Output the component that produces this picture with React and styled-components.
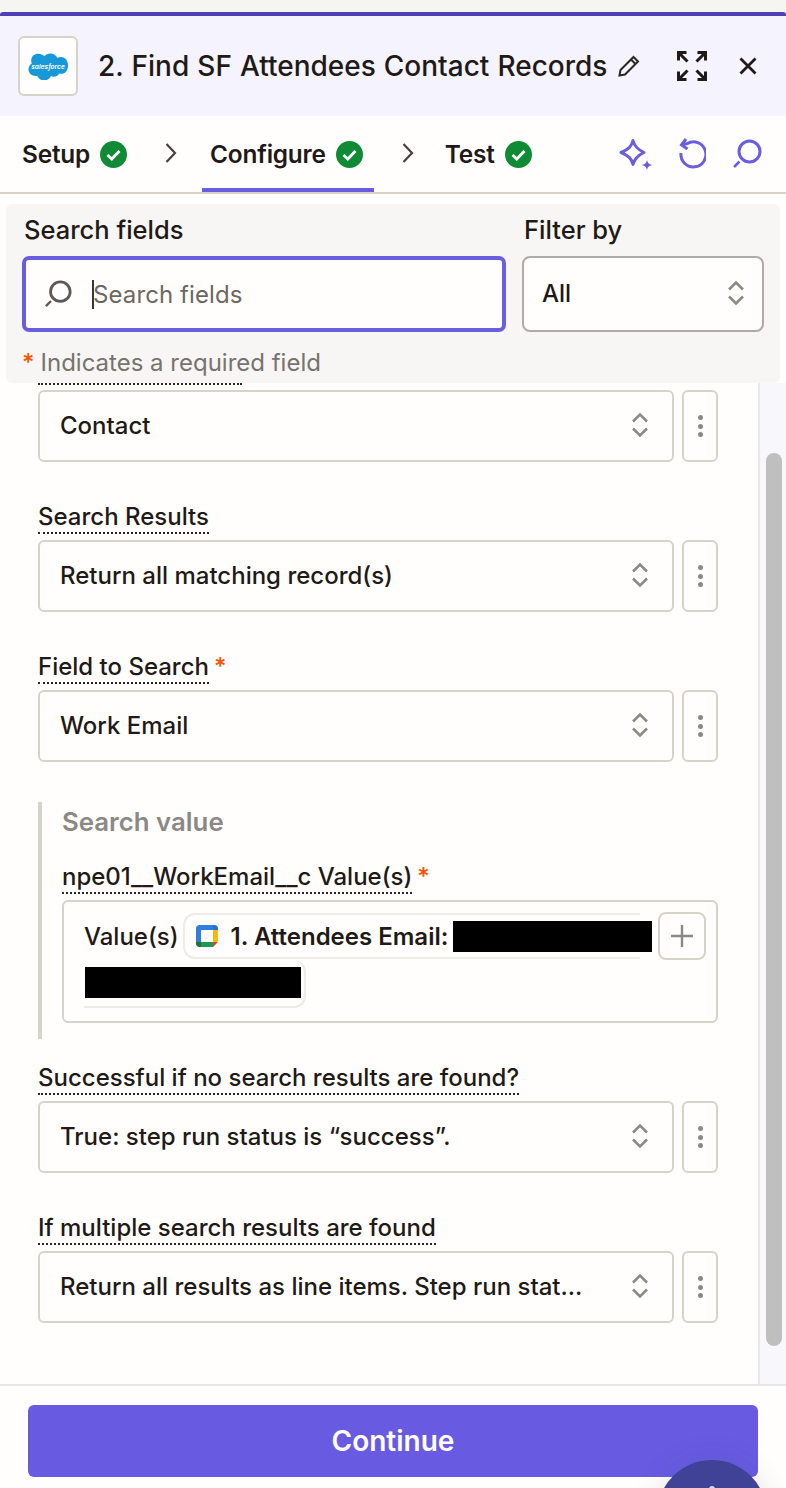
import React from "react";
import styled, { createGlobalStyle } from "styled-components";

const GlobalStyle = createGlobalStyle`
  html, body {
    margin: 0;
    padding: 0;
    background: #fffefc;
  }
  body {
    font-family: Inter, "Liberation Sans", sans-serif;
    color: #1f1a17;
  }
  * {
    box-sizing: border-box;
  }
`;

const colors = {
  purple: "#6a5ee0",
  border: "#d6d3ca",
  grey: "#8b8984",
  orange: "#ff4f00",
};

const Page = styled.div`
  position: relative;
  width: 786px;
  height: 1488px;
  overflow: hidden;
  display: flex;
  flex-direction: column;
  background: #f7f5f2;
  padding-top: 12px;
`;

const Header = styled.header`
  height: 104px;
  flex: none;
  display: flex;
  align-items: center;
  padding: 0 29px 0 18px;
  background: #f4f3fe;
  border-top: 4px solid #4f3fb5;
  border-radius: 3px 3px 0 0;
`;

const LogoBox = styled.div`
  width: 60px;
  height: 60px;
  flex: none;
  display: flex;
  align-items: center;
  justify-content: center;
  background: #fffefc;
  border: 2px solid ${colors.border};
  border-radius: 6px;
`;

const Title = styled.h1`
  margin: 0 0 0 20px;
  font-size: 28px;
  line-height: 36px;
  font-weight: 500;
  word-spacing: 0.6px;
  white-space: nowrap;
`;

const PencilButton = styled.span`
  display: flex;
  margin-left: 10px;
`;

const HeaderActions = styled.div`
  display: flex;
  align-items: center;
  gap: 32px;
  margin-left: auto;
`;

const Tabs = styled.nav`
  height: 78px;
  flex: none;
  display: flex;
  align-items: stretch;
  padding: 0 22px;
  background: #fffefc;
  border-bottom: 2px solid ${colors.border};
`;

const Tab = styled.div`
  display: flex;
  align-items: center;
  gap: 10px;
  padding: 4px ${(p) => (p.$active ? "11px" : "0")} 0 ${(p) => (p.$active ? "8px" : "0")};
  border-bottom: 4px solid ${(p) => (p.$active ? colors.purple : "transparent")};
  font-size: 24.4px;
  font-weight: 600;
  letter-spacing: -0.2px;
`;

const TabChevron = styled.span`
  display: flex;
  align-items: center;
  padding-bottom: 2px;
  margin: 0 ${(p) => p.$right}px 0 ${(p) => p.$left}px;
`;

const TabTools = styled.div`
  display: flex;
  align-items: center;
  gap: 24px;
  margin-left: auto;
  padding-right: 2px;
`;

const UndoGap = styled.span`
  display: flex;
  margin-right: 2px;
`;

const Body = styled.div`
  flex: 1;
  min-height: 0;
  display: flex;
  flex-direction: column;
  background: #fffefc;
  padding-top: 10px;
`;

const SearchPanel = styled.section`
  height: 179px;
  flex: none;
  margin: 0 6px;
  padding: 8px 16px 0;
  background: #f7f6f4;
  border-radius: 6px;
`;

const SearchGrid = styled.div`
  display: grid;
  grid-template-columns: 484px 242px;
  column-gap: 16px;
`;

const PanelLabel = styled.div`
  font-size: 25.5px;
  line-height: 36px;
  font-weight: 500;
  margin-left: 2px;
  margin-bottom: 8px;
`;

const SearchBox = styled.label`
  height: 76px;
  display: flex;
  align-items: center;
  padding-left: 18px;
  background: #fffefc;
  border: 4px solid ${colors.purple};
  border-radius: 7px;
`;

const Caret = styled.span`
  width: 2px;
  height: 29px;
  margin-left: 20px;
  background: #3a3733;
  flex: none;
`;

const SearchInput = styled.input`
  flex: 1;
  min-width: 0;
  margin-left: -1px;
  border: 0;
  outline: 0;
  padding: 0;
  background: transparent;
  font: 400 24px Inter, sans-serif;
  letter-spacing: 0.1px;
  color: #1f1a17;
  &::placeholder {
    color: #6b6862;
    opacity: 1;
  }
`;

const FilterSelect = styled.div`
  height: 76px;
  display: flex;
  align-items: center;
  justify-content: space-between;
  padding: 0 17px 2px 18px;
  background: #fffefc;
  border: 2px solid #aeaca5;
  border-radius: 8px;
  font-size: 24px;
  font-weight: 500;
`;

const RequiredNote = styled.div`
  margin-top: 15px;
  font-size: 24px;
  line-height: 32px;
  color: #77736d;
`;

const Star = styled.span`
  color: ${colors.orange};
  font-weight: 500;
  margin-right: ${(p) => p.$after || 0}px;
  margin-left: ${(p) => p.$before || 0}px;
`;

const ScrollRow = styled.div`
  flex: 1;
  min-height: 0;
  display: flex;
`;

const Fields = styled.div`
  flex: 1;
  padding: 0 40px 0 38px;
  overflow: hidden;
`;

const ClippedRule = styled.div`
  width: 204px;
  height: 2px;
  border-bottom: 2px dotted #2b2622;
`;

const Field = styled.div`
  margin-bottom: ${(p) => p.$gap}px;
`;

const FieldLabel = styled.div`
  display: inline-block;
  font-size: 24px;
  line-height: 27px;
  font-weight: 500;
  white-space: nowrap;
`;

const LabelText = styled.span`
  border-bottom: 2px dotted #2b2622;
  padding-bottom: 1px;
`;

const FieldRow = styled.div`
  display: flex;
  gap: 8px;
  margin-top: ${(p) => p.$top}px;
`;

const Select = styled.div`
  flex: 1;
  height: 72px;
  display: flex;
  align-items: center;
  justify-content: space-between;
  padding: 0 23px 2px 20px;
  border: 2px solid ${colors.border};
  border-radius: 6px;
  font-size: 24px;
  font-weight: 500;
  white-space: nowrap;
`;

const Kebab = styled.div`
  width: 36px;
  height: 72px;
  flex: none;
  display: flex;
  flex-direction: column;
  align-items: center;
  justify-content: center;
  gap: 3.5px;
  border: 2px solid ${colors.border};
  border-radius: 6px;
`;

const Dot = styled.span`
  width: 5px;
  height: 5px;
  border-radius: 50%;
  background: ${colors.grey};
`;

const SearchValue = styled.section`
  border-left: 4px solid ${colors.border};
  padding: 2px 0 16px 20px;
  margin-bottom: 25px;
`;

const SectionTitle = styled.div`
  font-size: 25.8px;
  line-height: 36px;
  font-weight: 600;
  color: #8b8984;
  margin-bottom: 23px;
`;

const ValueBox = styled.div`
  height: 123px;
  margin-top: 10px;
  padding: 10px 10px 0 20px;
  border: 2px solid ${colors.border};
  border-radius: 6px;
`;

const ValueRow = styled.div`
  display: flex;
  align-items: center;
  height: 48px;
`;

const ValueName = styled.span`
  font-size: 24px;
  font-weight: 500;
  margin-right: 4px;
  white-space: nowrap;
`;

const ChipStart = styled.div`
  width: 457px;
  height: 46px;
  flex: none;
  display: flex;
  align-items: center;
  gap: 13px;
  padding-left: 11px;
  border: 2px solid #ecebe5;
  border-right: 0;
  border-radius: 12px 0 0 12px;
  white-space: nowrap;
  font-size: 24px;
  font-weight: 600;
`;

const ChipEnd = styled.div`
  width: 222px;
  height: 48px;
  display: flex;
  align-items: flex-start;
  padding: 7px 0 0 1px;
  border-right: 2px solid #ecebe5;
  border-bottom: 2px solid #ecebe5;
  border-radius: 0 12px 12px 0;
`;

const Redacted = styled.span`
  width: ${(p) => p.$width}px;
  height: 31px;
  flex: none;
  background: #000;
`;

const RedactedInline = styled(Redacted)`
  margin-left: -8px;
`;

const PlusButton = styled.div`
  width: 48px;
  height: 48px;
  flex: none;
  margin-left: auto;
  display: flex;
  align-items: center;
  justify-content: center;
  border: 2px solid ${colors.border};
  border-radius: 8px;
  background: #fffefc;
`;

const Track = styled.div`
  width: 28px;
  flex: none;
  padding: 70px 4px 38px 6px;
  background: #f8f8fc;
  border-left: 2px solid #e8e7e3;
`;

const Thumb = styled.div`
  height: 100%;
  border-radius: 8px;
  background: #bfbfbf;
`;

const Footer = styled.footer`
  flex: none;
  height: 104px;
  padding: 19px 28px 0;
  background: #fffefc;
  border-top: 2px solid #e8e7e3;
`;

const ContinueButton = styled.button`
  width: 730px;
  height: 72px;
  display: block;
  border: 0;
  border-radius: 6px;
  background: #685be2;
  color: #fffefc;
  font: 600 28px Inter, sans-serif;
`;

const ChatBubble = styled.div`
  position: absolute;
  left: 657px;
  top: 1460px;
  width: 110px;
  height: 110px;
  border-radius: 50%;
  background: #3f4296;
  box-shadow: 0 0 30px rgba(60, 60, 90, 0.12);
`;

const ChatGlyph = styled.span`
  position: absolute;
  left: 52px;
  top: 26px;
  width: 6px;
  height: 3px;
  border-radius: 3px 3px 0 0;
  background: #d8d8f0;
`;

const IconSvg = styled.svg`
  flex: none;
  display: block;
`;

const Stepper = () => (
  <IconSvg width="18" height="26" viewBox="0 0 18 26" fill="none" stroke={colors.grey} strokeWidth="2.6">
    <path d="M2 9.5 9 2.5l7 7" />
    <path d="M2 16.5 9 23.5l7-7" />
  </IconSvg>
);

const CheckBadge = () => (
  <IconSvg width="27" height="27" viewBox="0 0 27 27">
    <circle cx="13.5" cy="13.5" r="13.5" fill="#0f8a35" />
    <path d="M7.5 14 11.8 18 19.5 10" fill="none" stroke="#fff" strokeWidth="2.8" />
  </IconSvg>
);

const Chevron = () => (
  <IconSvg width="12" height="22" viewBox="0 0 12 22" fill="none" stroke="#45423e" strokeWidth="2.2">
    <path d="M1.5 2 10 11 1.5 20" />
  </IconSvg>
);

const Magnifier = ({ color, size = 30 }) => (
  <IconSvg width={size} height={size} viewBox="0 0 30 30" fill="none" stroke={color} strokeWidth="3">
    <circle cx="17.5" cy="12.5" r="10.5" />
    <path d="M7.5 22.5 2 28" strokeWidth="2.5" />
  </IconSvg>
);

const SalesforceLogo = () => (
  <IconSvg width="40" height="28" viewBox="0 0 40 28">
    <path
      d="M16.5 4.2C18 2.5 20 1.5 22.3 1.5c3 0 5.6 1.7 7 4.2 1.2-.5 2.5-.8 3.8-.8 4.4 0 6.9 3.9 6.9 8.5s-2.5 8.3-6.9 8.3c-.6 0-1.2-.1-1.8-.2-1.1 2-3.2 3.3-5.6 3.3-1 0-2-.2-2.8-.7-1.2 2.7-3.8 4.4-6.8 4.4-3.1 0-5.8-1.9-6.9-4.7-.5.1-1 .2-1.5.2C3.3 24 .5 21 .5 17.3c0-2.5 1.3-4.7 3.3-5.8-.4-.9-.6-1.9-.6-3C3.2 4.5 6.4 1.8 10.3 1.8c2.4 0 4.7 1 6.2 2.4z"
      fill="#1798d8"
    />
    <text
      x="20"
      y="16.5"
      textAnchor="middle"
      fontSize="6.6"
      fontStyle="italic"
      fontWeight="600"
      fill="#fff"
      fontFamily="Inter, sans-serif"
    >
      salesforce
    </text>
  </IconSvg>
);

const CalendarIcon = () => (
  <IconSvg width="22" height="22" viewBox="0 0 22 22">
    <path d="M0 3.5C0 1.5 1.5 0 3.5 0H17v5H5v12H0z" fill="#2f7de0" />
    <path d="M17 0h1.5C20.5 0 22 1.5 22 3.5V5h-5z" fill="#2b6fd0" />
    <path d="M17 5h5v11l-5 6z" fill="#f5b90f" />
    <path d="M5 17h12v5H5z" fill="#1c9a55" />
    <path d="M0 17h5v5H3.5C1.5 22 0 20.5 0 18.5z" fill="#18733f" />
    <path d="M17 17h5l-5 5z" fill="#e0402f" />
  </IconSvg>
);

function KebabMenu() {
  return (
    <Kebab>
      <Dot />
      <Dot />
      <Dot />
    </Kebab>
  );
}

function SelectRow({ value, top }) {
  return (
    <FieldRow $top={top}>
      <Select>
        {value}
        <Stepper />
      </Select>
      <KebabMenu />
    </FieldRow>
  );
}

function SelectField({ label, value, required, gap }) {
  return (
    <Field $gap={gap}>
      <FieldLabel>
        <LabelText>{label}</LabelText>
        {required && <Star $before={5}>*</Star>}
      </FieldLabel>
      <SelectRow value={value} top={10} />
    </Field>
  );
}

export default function App() {
  return (
    <Page>
      <GlobalStyle />
      <Header>
        <LogoBox>
          <SalesforceLogo />
        </LogoBox>
        <Title>2. Find SF Attendees Contact Records</Title>
        <PencilButton>
          <IconSvg width="24" height="24" viewBox="0 0 24 24" fill="none" stroke="#2b2622" strokeWidth="2">
            <path d="M2.5 21.5 3.5 16 16.5 3 21 7.5l-13 13z" />
            <path d="M14 5.5 18.5 10" />
          </IconSvg>
        </PencilButton>
        <HeaderActions>
          <IconSvg width="30" height="30" viewBox="0 0 30 30" fill="none" stroke="#1f1a17" strokeWidth="3">
            <path d="M1.5 9.5v-8h8M2 2l8.5 8.5" />
            <path d="M28.5 9.5v-8h-8M28 2l-8.5 8.5" />
            <path d="M1.5 20.5v8h8M2 28l8.5-8.5" />
            <path d="M28.5 20.5v8h-8M28 28l-8.5-8.5" />
          </IconSvg>
          <IconSvg width="18" height="18" viewBox="0 0 18 18" fill="none" stroke="#1f1a17" strokeWidth="2.8">
            <path d="M1.5 1.5 16.5 16.5M16.5 1.5 1.5 16.5" />
          </IconSvg>
        </HeaderActions>
      </Header>

      <Tabs>
        <Tab>
          Setup
          <CheckBadge />
        </Tab>
        <TabChevron $left={38} $right={25}>
          <Chevron />
        </TabChevron>
        <Tab $active>
          Configure
          <CheckBadge />
        </Tab>
        <TabChevron $left={28} $right={31}>
          <Chevron />
        </TabChevron>
        <Tab>
          Test
          <CheckBadge />
        </Tab>
        <TabTools>
          <IconSvg width="34" height="32" viewBox="0 0 34 32" fill="none" stroke={colors.purple} strokeWidth="3">
            <path d="M15 2.5c1.5 6 4.5 9 11 12-6.500 3-9.500 6-11 12-1.500-6-4.500-9-12-12 7.500-3 10.500-6 12-12z" strokeLinejoin="round" />
            <path d="M29 22c.8 3 1.700 4 5 5-3.300 1-4.200 2-5 5-.8-3-1.700-4-5-5 3.300-1 4.200-2 5-5z" fill={colors.purple} stroke="none" />
          </IconSvg>
          <UndoGap>
            <IconSvg width="30" height="32" viewBox="0 0 30 32" fill="none" stroke={colors.purple} strokeWidth="3">
              <path d="M5 15a12.500 12.500 0 1 0 6-9.300L6 7" />
              <path d="M10 1 5.500 7l6 4" />
            </IconSvg>
          </UndoGap>
          <Magnifier color={colors.purple} />
        </TabTools>
      </Tabs>

      <Body>
        <SearchPanel>
          <SearchGrid>
            <div>
              <PanelLabel>Search fields</PanelLabel>
              <SearchBox>
                <Magnifier color="#5c5955" size={28} />
                <Caret />
                <SearchInput placeholder="Search fields" />
              </SearchBox>
            </div>
            <div>
              <PanelLabel>Filter by</PanelLabel>
              <FilterSelect>
                All
                <Stepper />
              </FilterSelect>
            </div>
          </SearchGrid>
          <RequiredNote>
            <Star $after={6}>*</Star>
            Indicates a required field
          </RequiredNote>
        </SearchPanel>

        <ScrollRow>
          <Fields>
            <Field $gap={41}>
              <ClippedRule />
              <SelectRow value="Contact" top={5} />
            </Field>
            <SelectField label="Search Results" value="Return all matching record(s)" gap={41} />
            <SelectField label="Field to Search" value="Work Email" required gap={40} />

            <SearchValue>
              <SectionTitle>Search value</SectionTitle>
              <FieldLabel>
                <LabelText>npe01__WorkEmail__c Value(s)</LabelText>
                <Star $before={5}>*</Star>
              </FieldLabel>
              <ValueBox>
                <ValueRow>
                  <ValueName>Value(s)</ValueName>
                  <ChipStart>
                    <CalendarIcon />
                    1. Attendees Email:
                    <RedactedInline $width={199} />
                  </ChipStart>
                  <PlusButton>
                    <IconSvg width="22" height="22" viewBox="0 0 22 22" stroke={colors.grey} strokeWidth="2.4">
                      <path d="M11 0v22M0 11h22" />
                    </IconSvg>
                  </PlusButton>
                </ValueRow>
                <ChipEnd>
                  <Redacted $width={216} />
                </ChipEnd>
              </ValueBox>
            </SearchValue>

            <SelectField label="Successful if no search results are found?" value="True: step run status is “success”." gap={41} />
            <SelectField label="If multiple search results are found" value="Return all results as line items. Step run stat..." gap={0} />
          </Fields>
          <Track>
            <Thumb />
          </Track>
        </ScrollRow>
      </Body>

      <Footer>
        <ContinueButton>Continue</ContinueButton>
      </Footer>

      <ChatBubble>
        <ChatGlyph />
      </ChatBubble>
    </Page>
  );
}
